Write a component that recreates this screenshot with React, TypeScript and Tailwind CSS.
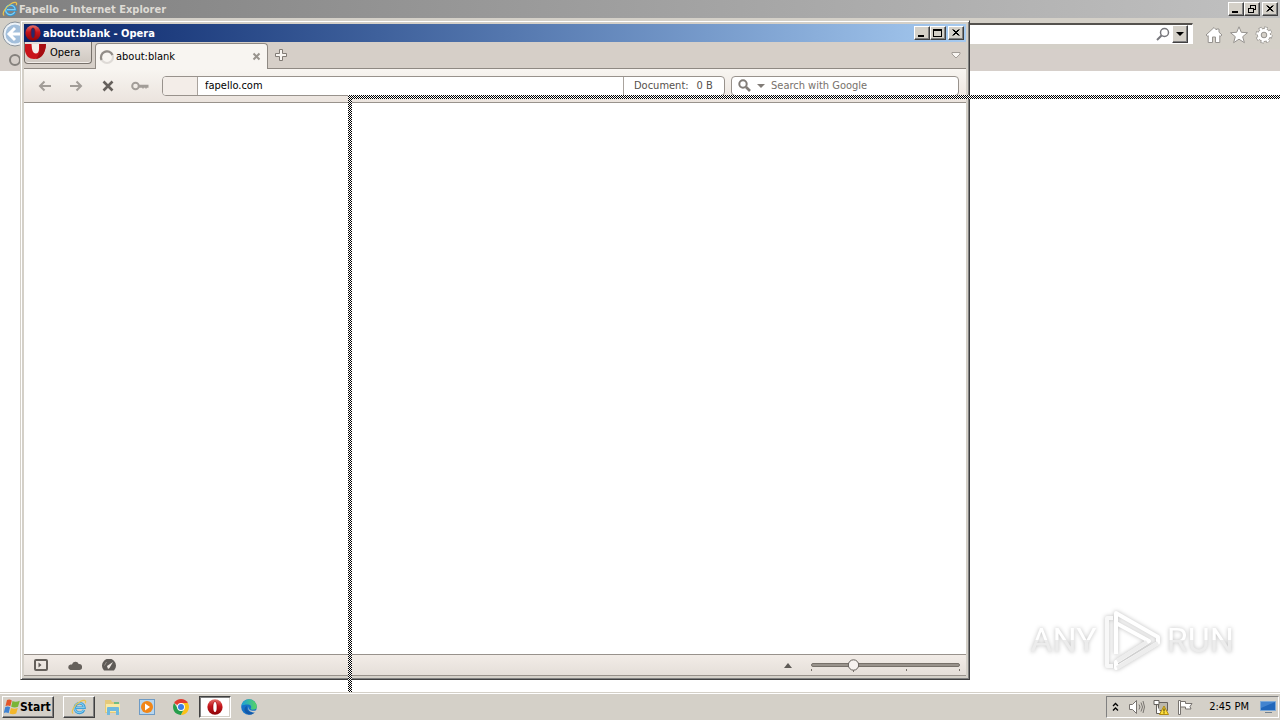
import type { ReactNode } from "react";

const raised =
  "bg-[#d4d0c8] border border-t-white border-l-white border-r-[#404040] border-b-[#404040] shadow-[inset_-1px_-1px_0_#808080]";

function IeLogo({ className }: { className: string }) {
  return (
    <svg viewBox="0 0 16 16" className={className} aria-hidden="true">
      <path
        d="M13 11A4.800 4.800 0 1 1 13.400 8.800H5"
        fill="none"
        stroke="#2f93d2"
        strokeWidth="2.600"
      />
      <path
        d="M12.800 10.800A4.800 4.800 0 1 1 13.200 8.600H5"
        fill="none"
        stroke="#7fcdf2"
        strokeWidth="1.200"
      />
      <path
        d="M2.200 14.600C-.5 13 3.200 6 9 2.800C12.500.7 15.700.8 14.300 4.300"
        fill="none"
        stroke="#ecc44c"
        strokeWidth="1.200"
      />
    </svg>
  );
}

function OperaLogo({ className, slot }: { className: string; slot: string }) {
  return (
    <svg viewBox="0 0 16 16" className={className} aria-hidden="true">
      <defs>
        <linearGradient id="operaRed" x1="0" y1="0" x2="0" y2="1">
          <stop offset="0" stopColor="#e4716b" />
          <stop offset=".45" stopColor="#c5151b" />
          <stop offset="1" stopColor="#8c0508" />
        </linearGradient>
      </defs>
      <ellipse cx="8" cy="8" rx="7.600" ry="7.800" fill="url(#operaRed)" />
      <ellipse cx="8" cy="8" rx="2.600" ry="5.600" fill="#a10a10" />
      <ellipse cx="8" cy="8" rx="1.700" ry="5" fill={slot} />
    </svg>
  );
}

function CaptionButton({ label, children }: { label: string; children: ReactNode }) {
  return (
    <button
      type="button"
      aria-label={label}
      className={`flex h-[14px] w-4 items-center justify-center ${raised}`}
    >
      <svg viewBox="0 0 12 10" className="h-[10px] w-3" shapeRendering="crispEdges" fill="none" stroke="#000">
        {children}
      </svg>
    </button>
  );
}

function CloseGlyph() {
  return <path d="M2.500 1.500l6 6M8.500 1.500l-6 6M3.500 1.500l6 6M9.500 1.500l-6 6" shapeRendering="auto" />;
}

function ExplorerWindow() {
  return (
    <section className="flex flex-1 flex-col bg-white" aria-label="Internet Explorer">
      <header className="flex h-[18px] items-center bg-linear-to-r from-[#808080] to-[#c1c1c1] pr-[2px] pl-[2px]">
        <IeLogo className="h-4 w-4" />
        <h1 className="ml-px flex-1 text-[11px] font-bold text-[#dedbd5]">Fapello - Internet Explorer</h1>
        <div className="flex">
          <CaptionButton label="Minimize">
            <path d="M2 8h6" strokeWidth="2" />
          </CaptionButton>
          <CaptionButton label="Restore">
            <path d="M4 1.500h6M4.500 1v3M9.500 1v5M7 5.500h3M2 4h6M2.500 4v5M7.500 4v5M2 8.500h6" />
          </CaptionButton>
          <div className="ml-[2px]">
            <CaptionButton label="Close">
              <CloseGlyph />
            </CaptionButton>
          </div>
        </div>
      </header>
      <div className="flex h-[31px] items-center bg-[#d4d0c8] pr-[7px]">
        <button type="button" aria-label="Back" className="ml-[2px]">
          <svg viewBox="0 0 26 26" className="h-[26px] w-[26px]">
            <circle cx="13" cy="13" r="12" fill="#edf3f8" stroke="#8c949b" />
            <circle cx="13" cy="13" r="9.500" fill="#a3bfdb" />
            <path d="M20 13H8M13 7l-6 6 6 6" fill="none" stroke="#fff" strokeWidth="3" />
          </svg>
        </button>
        <div className="ml-10 flex h-[21px] flex-1 items-center border border-t-2 border-[#fff] border-t-[#55524e] bg-white pr-1">
          <input aria-label="Address" className="min-w-0 flex-1 outline-none" />
          <svg viewBox="0 0 14 14" className="mr-[2px] h-[14px] w-[14px]" fill="none" stroke="#77777c">
            <circle cx="8.500" cy="5.500" r="4" strokeWidth="1.500" />
            <path d="M5.500 8.500L1 13" strokeWidth="2" />
          </svg>
          <button
            type="button"
            aria-label="Show addresses"
            className={`flex h-[18px] w-4 items-center justify-center ${raised}`}
          >
            <svg viewBox="0 0 8 4" className="h-1 w-2">
              <path d="M0 0h8L4 4z" />
            </svg>
          </button>
        </div>
        <div className="mt-[2px] ml-3 flex gap-[7px]">
          <button type="button" aria-label="Home">
            <svg viewBox="0 0 18 18" className="h-[18px] w-[18px]" fill="#fff" stroke="#96938f">
              <path d="M9 1.500L1 9l1.500 1.200.7-.6V16.500h4.300V11h3v5.500h4.300V9.600l.7.600L17 9l-3-2.800V3h-2.500v1z" />
            </svg>
          </button>
          <button type="button" aria-label="Favorites">
            <svg viewBox="0 0 18 18" className="h-[18px] w-[18px]" fill="#fff" stroke="#96938f">
              <path d="M9 .8l2.300 5.500 6.200.4-4.800 4 1.700 6L9 13.200 3.600 16.700l1.700-6L.5 6.700l6.200-.4z" />
            </svg>
          </button>
          <button type="button" aria-label="Tools">
            <svg viewBox="0 0 18 18" className="h-[18px] w-[18px]" fill="none">
              <circle cx="9" cy="9" r="6.700" stroke="#96938f" strokeWidth="3.600" strokeDasharray="3.160 2.100" />
              <circle cx="9" cy="9" r="6.400" stroke="#96938f" />
              <circle cx="9" cy="9" r="6.500" stroke="#fff" strokeWidth="2.600" strokeDasharray="2.200 2.900" />
              <circle cx="9" cy="9" r="4.600" stroke="#fff" strokeWidth="3" />
              <circle cx="9" cy="9" r="2.800" fill="#d4d0c8" stroke="#96938f" />
            </svg>
          </button>
        </div>
      </div>
      <div className="flex h-[22px] items-center bg-[#d6cfca] pl-2">
        <svg viewBox="0 0 14 14" className="h-[14px] w-[14px]">
          <circle cx="7" cy="7" r="5" fill="none" stroke="#85817d" strokeWidth="2" />
        </svg>
      </div>
      <main className="flex-1 bg-white" />
    </section>
  );
}

function OperaWindow() {
  return (
    <section
      aria-label="Opera"
      className="absolute top-5 right-[310px] bottom-10 left-5 flex flex-col border border-t-[#d4d0c8] border-r-[#404040] border-b-[#404040] border-l-[#d4d0c8] bg-[#d4d0c8] p-[3px] shadow-[inset_1px_1px_0_#fff,inset_-1px_-1px_0_#808080]"
    >
      <header className="flex h-[18px] shrink-0 items-center bg-linear-to-r from-[#0a246a] to-[#a6caf0] pr-[2px] pl-px">
        <OperaLogo className="h-4 w-4" slot="#27296a" />
        <h2 className="ml-[2px] flex-1 text-[11px] font-bold text-white">about:blank - Opera</h2>
        <div className="flex">
          <CaptionButton label="Minimize">
            <path d="M2 8h6" strokeWidth="2" />
          </CaptionButton>
          <CaptionButton label="Maximize">
            <path d="M1 1h9M1.500 1v8M9.500 1v8M1 8.500h9M1 2h9" />
          </CaptionButton>
          <div className="ml-[2px]">
            <CaptionButton label="Close">
              <CloseGlyph />
            </CaptionButton>
          </div>
        </div>
      </header>

      <div className="flex h-[27px] shrink-0 border-b border-[#8f8983] bg-[#d6cfc8]">
        <button
          type="button"
          className="flex h-[22px] w-[68px] items-center rounded-b-[4px] border border-t-0 border-[#77716b] bg-linear-to-b from-[#e5dfda] to-[#cfc8c1] text-[11px] shadow-[inset_0_-1px_0_#f3eeea]"
        >
          <svg viewBox="0 0 22 18" className="h-[18px] w-[22px] self-start" aria-hidden="true">
            <path d="M0 2h21C20.500 11 16 17 9 17C4 17 1 14 0 9z" fill="#c9141b" />
            <path d="M15 2h6C20.500 11 17 16 11 17C15 12 15 7 15 2z" fill="#a50d12" />
            <path d="M6.500 2h7.500v5c0 6-6 6-7 0z" fill="#f3efec" />
          </svg>
          <span className="ml-[3px]">Opera</span>
        </button>
        <div className="mt-px ml-[3px] -mb-px flex w-[173px] items-center rounded-t-[4px] border border-b-0 border-[#8f8983] bg-[#f8f5f1] pr-[6px] pl-[3px] text-[11px]">
          <svg viewBox="0 0 16 16" className="h-4 w-4" fill="none" strokeWidth="2.200">
            <circle cx="8" cy="8" r="6" stroke="#dedad6" />
            <path d="M2.500 11A6 6 0 0 1 13.500 6" stroke="#918c87" />
          </svg>
          <span className="ml-px flex-1">about:blank</span>
          <button type="button" aria-label="Close tab">
            <svg viewBox="0 0 9 9" className="h-[9px] w-[9px]">
              <path d="M1.500 1.500l6 6M7.500 1.500l-6 6" stroke="#99948e" strokeWidth="2" />
            </svg>
          </button>
        </div>
        <button type="button" aria-label="New tab" className="ml-[6px]">
          <svg viewBox="0 0 14 14" className="h-[14px] w-[14px]">
            <path d="M5.500 1.500h3v4h4v3h-4v4h-3v-4h-4v-3h4z" fill="#f8f5f1" stroke="#817b75" />
          </svg>
        </button>
        <button type="button" aria-label="Closed tabs" className="mr-[5px] ml-auto">
          <svg viewBox="0 0 10 8" className="h-2 w-[10px]">
            <path d="M1 1.500h8v1.500L5 7 1 3z" fill="#f8f5f1" stroke="#a29c96" />
          </svg>
        </button>
      </div>

      <div className="flex h-[34px] shrink-0 items-center border-b border-[#98928c] bg-linear-to-b from-[#f8f5f1] to-[#ebe4de] pr-[7px] pl-[14px] text-[11px]">
        <div className="flex w-[124px] shrink-0 gap-[17px]">
          <button type="button" aria-label="Back">
            <svg viewBox="0 0 14 14" className="h-[14px] w-[14px]" fill="none" stroke="#a29d98" strokeWidth="2">
              <path d="M13 7H2M6.500 2.500L2 7l4.500 4.500" />
            </svg>
          </button>
          <button type="button" aria-label="Forward">
            <svg viewBox="0 0 14 14" className="h-[14px] w-[14px]" fill="none" stroke="#a29d98" strokeWidth="2">
              <path d="M1 7h11M7.500 2.500L12 7l-4.500 4.500" />
            </svg>
          </button>
          <button type="button" aria-label="Stop" className="ml-[2px]">
            <svg viewBox="0 0 12 12" className="h-3 w-3" stroke="#65605c" strokeWidth="2.600">
              <path d="M1.500 1.500l9 9M10.500 1.500l-9 9" />
            </svg>
          </button>
          <button type="button" aria-label="Passwords">
            <svg viewBox="0 0 18 10" className="h-[10px] w-[18px]" fill="none" stroke="#a29d98">
              <circle cx="4.500" cy="5" r="3.300" strokeWidth="2" />
              <path d="M8 4.500h9.500M8 6h9.500M12 6.500v1M15 6.500v1" strokeWidth="1.500" />
            </svg>
          </button>
        </div>
        <div className="flex h-5 flex-1 overflow-hidden rounded-[4px] border border-[#98928c] bg-white">
          <div className="w-[35px] border-r border-[#a9a39d] bg-[#f3ede8]" />
          <input
            aria-label="Address"
            defaultValue="fapello.com"
            className="min-w-0 flex-1 px-[7px] outline-none"
          />
          <div className="flex w-[101px] items-center gap-2 border-l border-[#a9a39d] pl-[10px] whitespace-nowrap text-[#55504c]">
            <span>Document:</span>
            <span>0 B</span>
          </div>
        </div>
        <div className="ml-[6px] flex h-5 w-[228px] items-center rounded-[4px] border border-[#98928c] bg-white pl-[6px]">
          <svg viewBox="0 0 13 13" className="h-[13px] w-[13px]" fill="none" stroke="#817c77">
            <circle cx="5" cy="5" r="3.700" strokeWidth="2" />
            <path d="M8 8l4 4" strokeWidth="2.600" />
          </svg>
          <svg viewBox="0 0 8 4" className="ml-[6px] h-1 w-2" fill="#817c77">
            <path d="M0 0h8L4 4z" />
          </svg>
          <input
            aria-label="Search"
            placeholder="Search with Google"
            className="ml-[6px] min-w-0 flex-1 outline-none placeholder:text-[#77716b]"
          />
        </div>
      </div>

      <main className="flex-1 bg-white" />

      <footer className="flex h-[22px] shrink-0 items-center border-t border-b border-[#98928c] bg-linear-to-b from-[#f2ece7] to-[#e5dfd9] pr-[6px] pl-[10px]">
        <div className="flex items-center gap-5">
          <button type="button" aria-label="Panels">
            <svg viewBox="0 0 14 12" className="h-3 w-[14px]">
              <rect x="1" y="1" width="12" height="10" rx="1" fill="none" stroke="#65605b" strokeWidth="2" />
              <path d="M4.500 3.500L7.500 6l-3 2.500z" fill="#5f5b57" />
            </svg>
          </button>
          <button type="button" aria-label="Opera Link">
            <svg viewBox="0 0 14 10" className="h-[10px] w-[14px]" fill="#65605b">
              <path d="M2.500 10a2.800 2.800 0 0 1 0-5.500H4A3.500 3.500 0 0 1 10.700 4 3 3 0 0 1 11.500 10z" />
            </svg>
          </button>
          <button type="button" aria-label="Opera Turbo">
            <svg viewBox="0 0 14 12" className="h-3 w-[14px]">
              <path d="M2 11.500A7 7 0 1 1 12 11.500z" fill="#5f5b57" />
              <path d="M6 10L5 7l6-4-3.500 6z" fill="#f0eae5" />
              <path d="M2.500 6.500l2-3.500" stroke="#99938d" />
            </svg>
          </button>
        </div>
        <button type="button" aria-label="Show view options" className="ml-auto">
          <svg viewBox="0 0 8 5" className="h-[5px] w-2" fill="#5f5b57">
            <path d="M0 5h8L4 0z" />
          </svg>
        </button>
        <div className="relative ml-[18px] h-4 w-[150px]">
          <svg viewBox="0 0 150 16" className="h-4 w-[150px]">
            <rect x="1.500" y="6.500" width="148" height="3" rx="1.500" fill="#99938c" stroke="#77716a" />
            <path d="M1.500 12v2M43.500 12v3M96.500 12v2M149.500 12v2" stroke="#77716a" />
            <circle cx="43.500" cy="8" r="5.200" fill="#f6f2ef" stroke="#65605b" />
          </svg>
          <input
            type="range"
            aria-label="Zoom"
            min={20}
            max={300}
            defaultValue={100}
            className="absolute inset-0 w-full opacity-0"
          />
        </div>
      </footer>
    </section>
  );
}

function DragOutline() {
  return (
    <div
      className="pointer-events-none absolute top-[95px] right-0 bottom-7 left-[348px] flex flex-col"
      aria-hidden="true"
    >
      <div className="h-1 bg-[repeating-conic-gradient(#000_0_25%,#fff_0_50%)] bg-[length:2px_2px]" />
      <div className="w-1 flex-1 bg-[repeating-conic-gradient(#000_0_25%,#fff_0_50%)] bg-[length:2px_2px]" />
    </div>
  );
}

function Watermark() {
  const word =
    "bg-linear-to-b from-white from-50% to-[#ececec] to-50% bg-clip-text text-transparent drop-shadow-[0_0_2px_#bdbdbd]";
  return (
    <div className="absolute right-[46px] bottom-[48px] flex items-center gap-1 font-['Roboto','Liberation_Sans',sans-serif] text-[34px] leading-[60px]">
      <span className={word}>ANY</span>
      <svg
        viewBox="0 0 60 64"
        className="h-16 w-[60px] drop-shadow-[0_0_2px_#bdbdbd]"
        fill="none"
        strokeWidth="4"
        strokeLinejoin="round"
      >
        <path d="M12 10H6v48h6" stroke="#f8f8f8" />
        <path d="M15 46V5l42 24v6L15 60v-6l33-21-33-18" stroke="#fff" />
        <path d="M16 53l30-19M16 60l41-25" stroke="#ededed" />
      </svg>
      <span className={`ml-[2px] ${word}`}>RUN</span>
    </div>
  );
}

function FlagLogo() {
  return (
    <svg viewBox="0 0 16 16" className="h-4 w-4 shrink-0" aria-hidden="true">
      <path d="M3 1c2-1 3.200-.5 4.800.5L6.300 7.300C5 6.300 3.500 6.200 1.500 7z" fill="#e2562a" />
      <path d="M8.500 2c2 1 4.500 1 7.300-.3L14 7.700c-2 1-4.500 1-6.800 0z" fill="#79b537" />
      <path d="M1.300 8c1.800-.8 3.500-.7 4.800.3L4.600 14.300C3.300 13.300 1.800 13.200-.3 14z" fill="#3f83d3" />
      <path d="M7 8.900c2.200 1 4.500 1 6.800 0L12.200 14.600c-2.200 1-4.500 1-6.700 0z" fill="#f3b72b" />
    </svg>
  );
}

function FolderIcon() {
  return (
    <svg viewBox="0 0 16 16" className="h-4 w-4">
      <path d="M0 1h6l1 2h7v11H0z" fill="#e5c97a" />
      <path d="M1 5h14v8H1z" fill="#f8e9a4" />
      <path d="M2 16V9q0-1 1-1h10q1 0 1 1v7h-3v-4H5v4z" fill="#6fb9de" />
      <path d="M9 3h5v2H9z" fill="#73bd81" />
    </svg>
  );
}

function MediaIcon() {
  return (
    <svg viewBox="0 0 16 16" className="h-4 w-4">
      <rect x=".5" y=".5" width="15" height="15" fill="#b7d6ef" stroke="#6e9bc5" />
      <circle cx="8" cy="8" r="6" fill="#f18618" />
      <path d="M6 4.500l5 3.500-5 3.500z" fill="#fff" />
    </svg>
  );
}

function ChromeIcon() {
  return (
    <svg viewBox="0 0 16 16" className="h-4 w-4">
      <path d="M8 8L1.100 4A8 8 0 0 1 14.900 4z" fill="#e33b2e" />
      <path d="M8 8V4h6.900A8 8 0 0 1 8 16l3-6z" fill="#fbc116" />
      <path d="M8 8l3 2-3.200 6A8 8 0 0 1 1.100 4L5 10z" fill="#269e4b" />
      <circle cx="8" cy="8" r="3.900" fill="#fff" />
      <circle cx="8" cy="8" r="3" fill="#3c7de6" />
    </svg>
  );
}

function EdgeIcon() {
  return (
    <svg viewBox="0 0 16 16" className="h-4 w-4">
      <defs>
        <linearGradient id="edgeTop" x1="0" y1="0" x2="1" y2="0">
          <stop offset="0" stopColor="#1a9edc" />
          <stop offset="1" stopColor="#58d660" />
        </linearGradient>
      </defs>
      <circle cx="8" cy="8" r="7.800" fill="#1672c8" />
      <path
        d="M.3 7A7.800 7.800 0 0 1 15.800 7.500C15.800 11 11 11.500 9.500 10c1.500-2 .5-4.500-2.500-4.500S1.500 6 .3 7z"
        fill="url(#edgeTop)"
      />
      <path d="M6 7c-1 4 2 7 7.500 6.500C9.500 18 3 14.500 3.500 10 3.700 8.500 4.500 7.500 6 7z" fill="#1459a8" />
      <path d="M8 7c-1 1.500-.5 5.500 6 4.700l2-.7v3l-2.500-.5C10 13.500 5.500 11 8 7z" fill="#d4d0c8" />
    </svg>
  );
}

function TaskButton({
  label,
  className = "",
  children,
}: {
  label: string;
  className?: string;
  children: ReactNode;
}) {
  return (
    <button type="button" aria-label={label} className={`flex h-[22px] w-8 items-center justify-center ${className}`}>
      {children}
    </button>
  );
}

function Taskbar() {
  return (
    <footer className="flex h-7 shrink-0 items-center border-t border-[#d4d0c8] bg-[#d4d0c8] pr-px pl-[2px] shadow-[inset_0_1px_0_#fff]">
      <button type="button" className={`flex h-[22px] w-[52px] items-center pl-px text-[12px] font-bold ${raised}`}>
        <FlagLogo />
        <span>Start</span>
      </button>
      <nav className="ml-[9px] flex gap-[2px]" aria-label="Running programs">
        <TaskButton label="Internet Explorer" className={raised}>
          <IeLogo className="h-4 w-4" />
        </TaskButton>
        <TaskButton label="Windows Explorer">
          <FolderIcon />
        </TaskButton>
        <TaskButton label="Media Player">
          <MediaIcon />
        </TaskButton>
        <TaskButton label="Chrome">
          <ChromeIcon />
        </TaskButton>
        <TaskButton
          label="Opera"
          className="border border-t-[#404040] border-r-white border-b-white border-l-[#404040] bg-white shadow-[inset_1px_1px_0_#808080,inset_-1px_-1px_0_#d4d0c8]"
        >
          <OperaLogo className="h-4 w-4" slot="#ffffff" />
        </TaskButton>
        <TaskButton label="Edge">
          <EdgeIcon />
        </TaskButton>
      </nav>
      <div className="ml-auto flex h-[22px] items-center border border-t-[#808080] border-r-white border-b-white border-l-[#808080] pr-[2px] pl-[5px] text-[11px]">
        <button type="button" aria-label="Show hidden icons">
          <svg viewBox="0 0 7 10" className="h-[10px] w-[7px]" fill="none" stroke="#000" strokeWidth="1.300">
            <path d="M1 4l2.500-2.500L6 4M1 8.500L3.500 6 6 8.500" />
          </svg>
        </button>
        <svg viewBox="0 0 16 16" className="ml-[10px] h-4 w-4" fill="none" stroke="#77736f">
          <path d="M.5 5.500h3l4-4v13l-4-4h-3z" fill="#fff" />
          <path d="M10 5.500q2 2.500 0 5M12 3.500q3 4.500 0 9M14 2q3 6 0 12" />
        </svg>
        <svg viewBox="0 0 16 16" className="ml-2 h-4 w-4">
          <path d="M5.500 3.500h9v8h-9z" fill="#bcb8ac" stroke="#65615d" />
          <path d="M1 1.500h5v4H1zM3.500 5.500v9H8" fill="#fff" stroke="#65615d" />
          <path d="M11 7l4.500 8.500h-9z" fill="#ffdf3a" stroke="#b08a10" />
          <path d="M11 9.500v3M11 13.300v1.200" stroke="#332600" />
        </svg>
        <svg viewBox="0 0 16 16" className="ml-2 h-4 w-4">
          <path d="M1.500 1.500h2v14h-2z" fill="#fff" stroke="#77736f" />
          <path d="M3.500 2.500h5v2h6.500l-2 3 1 2.500H8.500v-2h-5z" fill="#fff" stroke="#77736f" />
        </svg>
        <time className="ml-4 whitespace-nowrap">2:45 PM</time>
        <button type="button" aria-label="Show desktop" className="ml-[11px]">
          <svg viewBox="0 0 16 14" className="h-[14px] w-4">
            <path d="M.5 1.500h15v9H.5z" fill="#2167bb" stroke="#7ca9d8" />
            <path d="M1 2h14L1 8z" fill="#4384cf" />
            <path d="M5 12.500h7" stroke="#718190" />
          </svg>
        </button>
      </div>
    </footer>
  );
}

export default function App() {
  return (
    <div className="relative flex min-h-screen flex-col overflow-hidden bg-white font-['DejaVu_Sans_Condensed','DejaVu_Sans',sans-serif] leading-none text-black">
      <ExplorerWindow />
      <OperaWindow />
      <Watermark />
      <DragOutline />
      <Taskbar />
    </div>
  );
}
